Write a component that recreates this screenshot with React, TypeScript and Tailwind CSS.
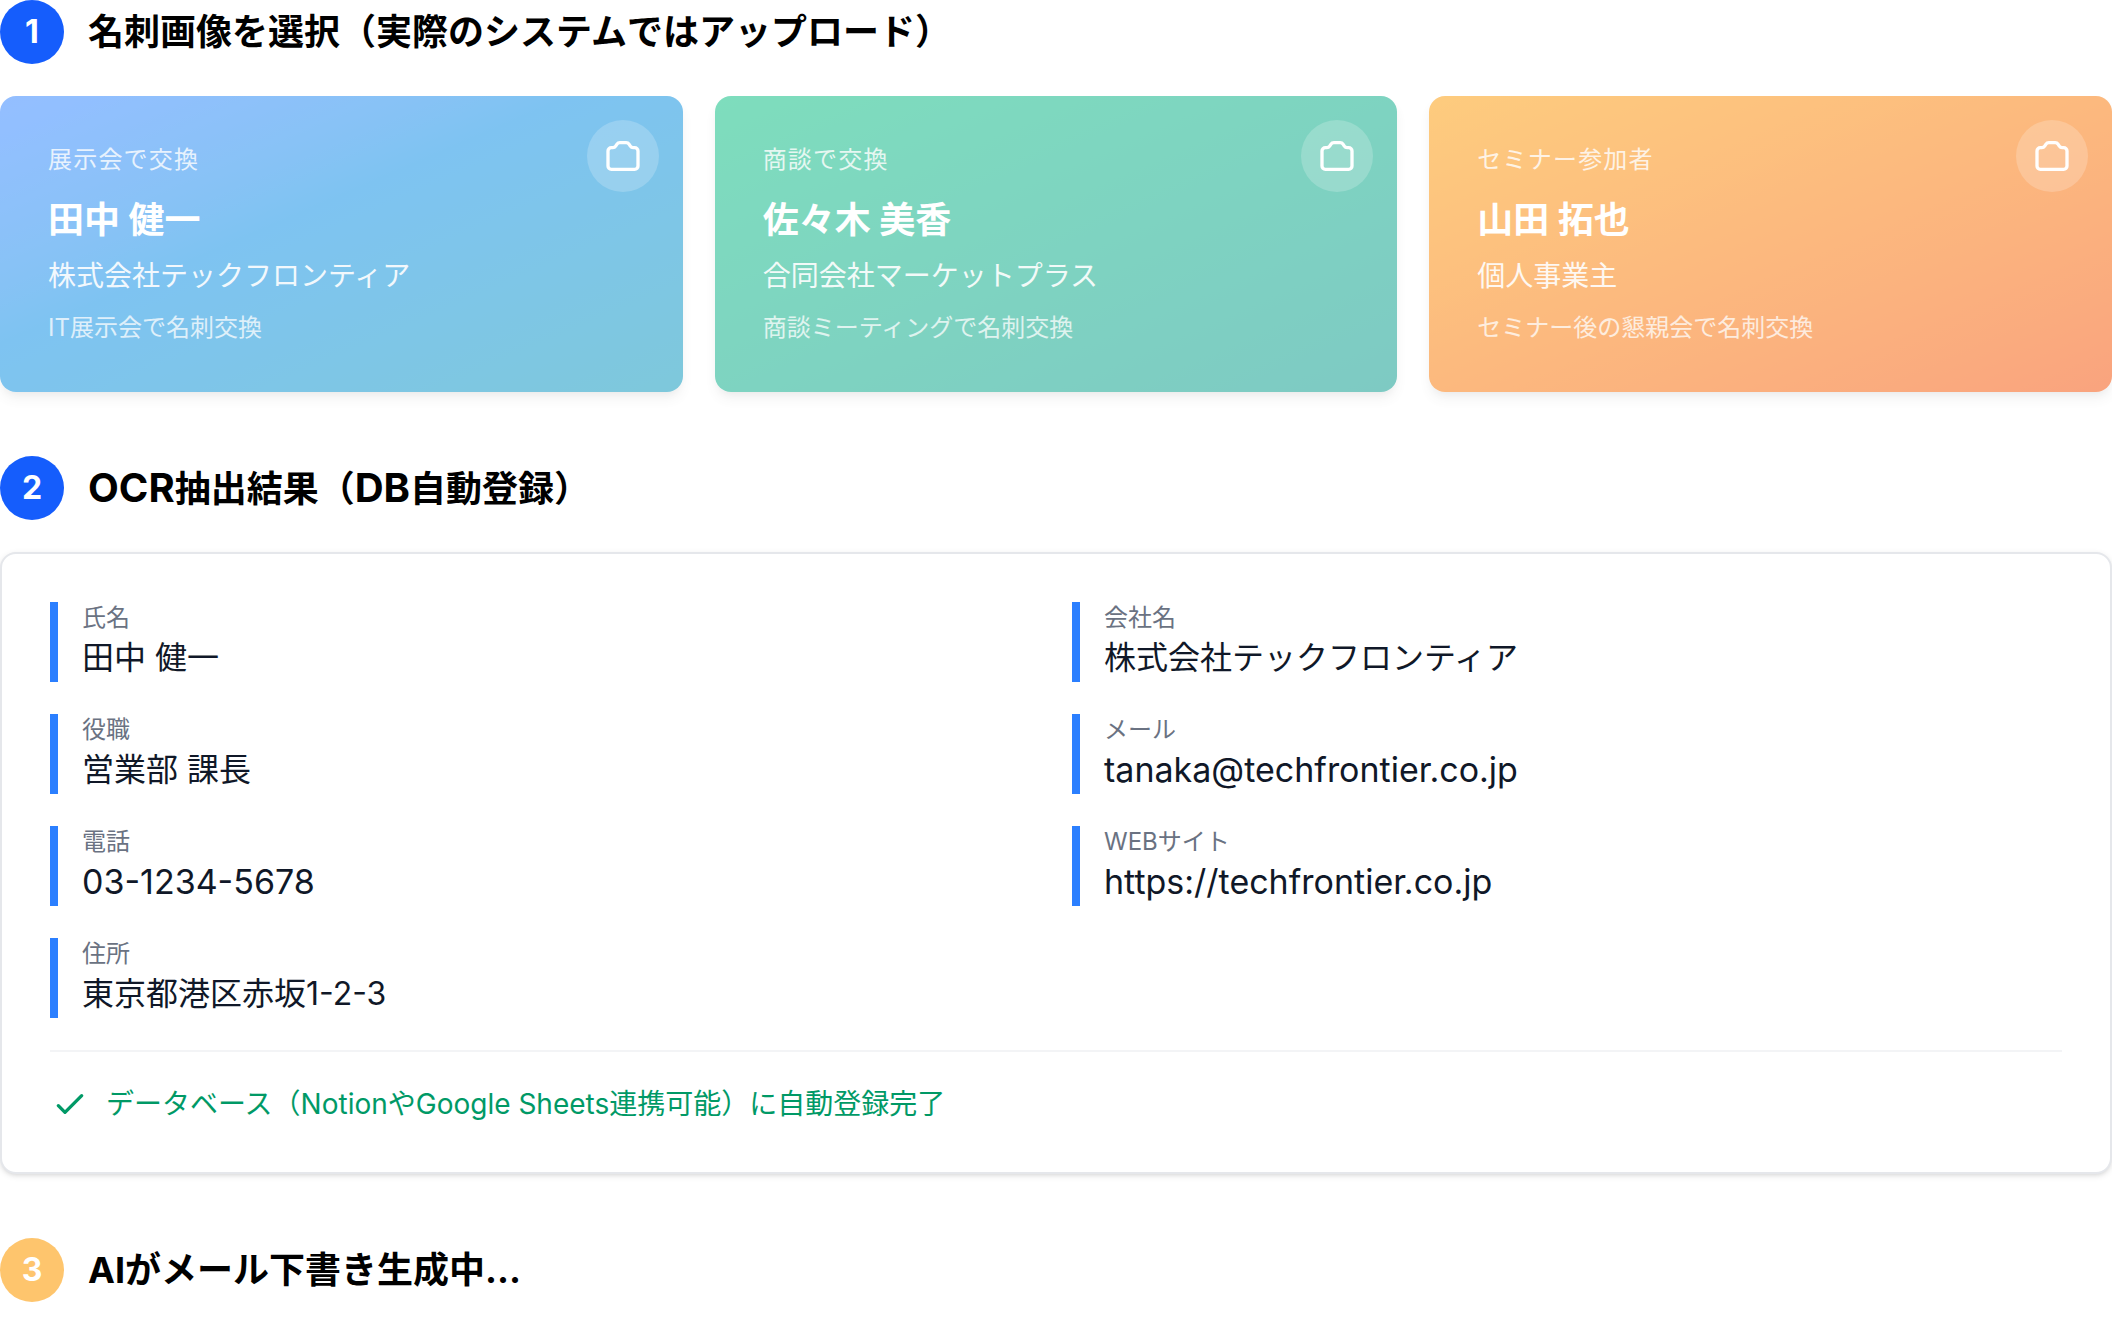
import { type ReactNode } from 'react';
import { clsx } from 'clsx';

const cards = [
    { tag: '展示会で交換', name: '田中 健一', company: '株式会社テックフロンティア', note: 'IT展示会で名刺交換', gradient: 'from-blue-500 to-cyan-600' },
    { tag: '商談で交換', name: '佐々木 美香', company: '合同会社マーケットプラス', note: '商談ミーティングで名刺交換', gradient: 'from-emerald-500 to-teal-600' },
    { tag: 'セミナー参加者', name: '山田 拓也', company: '個人事業主', note: 'セミナー後の懇親会で名刺交換', gradient: 'from-amber-500 to-orange-600' },
];

const fields = [
    { label: '氏名', value: '田中 健一' },
    { label: '会社名', value: '株式会社テックフロンティア' },
    { label: '役職', value: '営業部 課長' },
    { label: 'メール', value: 'tanaka@techfrontier.co.jp', latin: true },
    { label: '電話', value: '03-1234-5678', latin: true },
    { label: 'WEBサイト', value: 'https://techfrontier.co.jp', latin: true },
    { label: '住所', value: '東京都港区赤坂1-2-3' },
];

function StepHeading({ step, pending = false, children }: { step: number; pending?: boolean; children: ReactNode }) {
    return (
        <div className="flex items-center gap-6">
            <span
                className={clsx(
                    'flex size-16 shrink-0 items-center justify-center rounded-full text-[32px] font-bold text-white',
                    pending ? 'bg-[#fec56d]' : 'bg-blue-600'
                )}
            >
                {step}
            </span>
            <h2 className="text-4xl font-bold text-black">{children}</h2>
        </div>
    );
}

function CameraIcon() {
    return (
        <svg className="size-10" fill="none" stroke="currentColor" viewBox="0 0 24 24" aria-hidden="true">
            <path
                strokeLinecap="round"
                strokeLinejoin="round"
                strokeWidth={2}
                d="M3 9a2 2 0 012-2h.93a2 2 0 001.664-.89l.812-1.22A2 2 0 0110.07 4h3.86a2 2 0 011.664.89l.812 1.22A2 2 0 0018.07 7H19a2 2 0 012 2v9a2 2 0 01-2 2H5a2 2 0 01-2-2V9z"
            />
        </svg>
    );
}

function CheckIcon() {
    return (
        <svg className="size-10 shrink-0" fill="none" stroke="currentColor" viewBox="0 0 24 24" aria-hidden="true">
            <path strokeLinecap="round" strokeLinejoin="round" strokeWidth={2} d="M5 13l4 4L19 7" />
        </svg>
    );
}

export default function App() {
    return (
        <main lang="ja" className="space-y-16 bg-white font-['Inter','Noto_Sans_CJK_JP',sans-serif]">
            {/* Step 1: card selection */}
            <section className="space-y-8">
                <StepHeading step={1}>名刺画像を選択（実際のシステムではアップロード）</StepHeading>
                <div className="grid grid-cols-3 gap-8">
                    {cards.map((card) => (
                        <button
                            key={card.name}
                            type="button"
                            disabled
                            className={clsx(
                                'relative rounded-2xl bg-linear-to-br p-12 text-left text-white opacity-50 shadow-[0_8px_12px_-2px_rgb(0_0_0/0.1),0_4px_8px_-4px_rgb(0_0_0/0.1)]',
                                card.gradient
                            )}
                        >
                            <span className="absolute top-6 right-6 flex size-18 items-center justify-center rounded-full bg-white/20">
                                <CameraIcon />
                            </span>
                            <span className="mb-4 block text-2xl tracking-wider opacity-80">{card.tag}</span>
                            <span className="mb-2 block text-4xl/14 font-bold">{card.name}</span>
                            <span className="block text-[28px]/10 opacity-90">{card.company}</span>
                            <span className="mt-4 block text-2xl opacity-75">{card.note}</span>
                        </button>
                    ))}
                </div>
            </section>

            {/* Step 2: OCR result */}
            <section className="space-y-8">
                <StepHeading step={2}>
                    <span className="text-[40px]/10">OCR</span>抽出結果（<span className="text-[40px]/10">DB</span>自動登録）
                </StepHeading>
                <div className="rounded-2xl border-2 border-gray-200 bg-white p-12 shadow-[0_2px_6px_0_rgb(0_0_0/0.1),0_2px_4px_-2px_rgb(0_0_0/0.1)]">
                    <dl className="grid grid-cols-2 gap-8">
                        {fields.map((field) => (
                            <div key={field.label} className="border-l-8 border-blue-500 pl-6">
                                <dt className="text-2xl text-gray-500">{field.label}</dt>
                                <dd className={clsx('text-gray-900', field.latin ? 'text-[34px]/12' : 'text-[32px]/12')}>{field.value}</dd>
                            </div>
                        ))}
                    </dl>
                    <div className="mt-8 flex items-center gap-4 border-t-2 border-gray-100 pt-8 text-emerald-600">
                        <CheckIcon />
                        <p className="text-[28px]/10">データベース（NotionやGoogle Sheets連携可能）に自動登録完了</p>
                    </div>
                </div>
            </section>

            {/* Step 3: mail draft */}
            <section>
                <StepHeading step={3} pending>
                    AIがメール下書き生成中...
                </StepHeading>
            </section>
        </main>
    );
}
